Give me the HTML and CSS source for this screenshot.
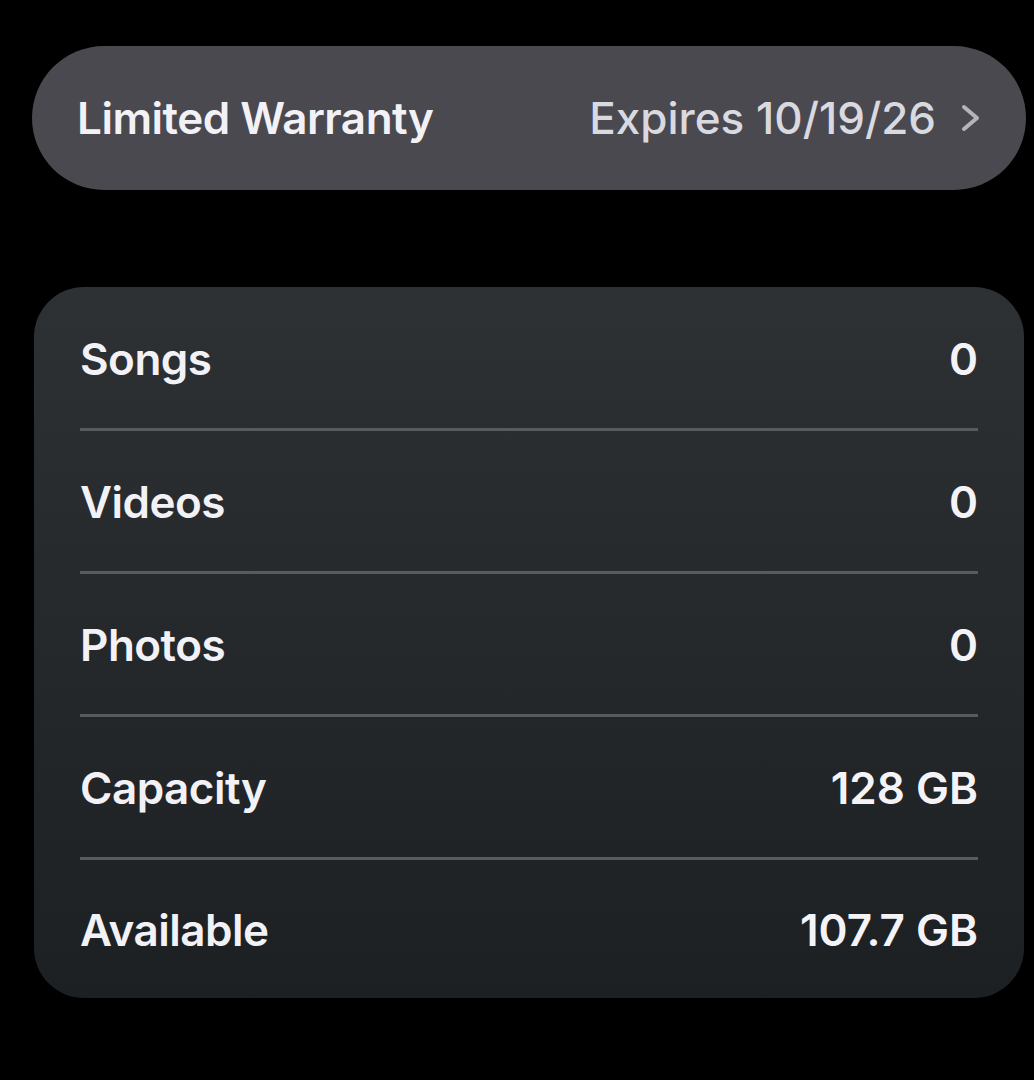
FILE: index.html
```html
<!DOCTYPE html>
<html lang="en">
<head>
  <meta charset="UTF-8" />
  <title>About</title>
  <meta name="viewport" content="width=device-width, initial-scale=1.0" />
  <link rel="stylesheet" href="styles.css">
</head>
<body>

  <div class="screen">

    <!-- warranty row -->
    <div class="pill">
      <span class="label">Limited Warranty</span>
      <span class="pill-value">
        Expires 10/19/26
        <svg class="chevron" width="20" height="30" viewBox="0 0 20 30">
          <path d="M4 4 L17 15 L4 26" fill="none" stroke="#b4b4bc" stroke-width="4" stroke-linecap="round" stroke-linejoin="round"/>
        </svg>
      </span>
    </div>

    <!-- media / storage -->
    <div class="card">
      <div class="row">
        <span class="label">Songs</span>
        <span class="value">0</span>
      </div>
      <div class="sep"></div>
      <div class="row">
        <span class="label">Videos</span>
        <span class="value">0</span>
      </div>
      <div class="sep"></div>
      <div class="row">
        <span class="label">Photos</span>
        <span class="value">0</span>
      </div>
      <div class="sep"></div>
      <div class="row">
        <span class="label">Capacity</span>
        <span class="value">128 GB</span>
      </div>
      <div class="sep"></div>
      <div class="row">
        <span class="label">Available</span>
        <span class="value">107.7 GB</span>
      </div>
    </div>

  </div>

</body>
</html>
```

FILE: styles.css
```css
body {
  margin: 0;
  background-color: #000;
  color: #f2f2f6;
  font-family: Inter, 'Liberation Sans', sans-serif;
  font-weight: 600;
}
.screen {
  width: 1034px;
  height: 1080px;
  padding-top: 46px;
  box-sizing: border-box;
  overflow: hidden;
}
.pill {
  margin: 0 8px 0 32px;
  height: 144px;
  border-radius: 72px;
  background-color: #4a4950;
  display: flex;
  align-items: center;
  justify-content: space-between;
  padding: 0 46px 0 45px;
  font-size: 44px;
}
.pill-value {
  display: flex;
  align-items: center;
  gap: 24px;
  color: #d9d9e0;
  font-weight: 500;
}
.chevron { display: block; }
.label { letter-spacing: -0.5px; }
.card {
  margin: 97px 10px 0 34px;
  border-radius: 50px;
  background: linear-gradient(#2e3134, #1c2023);
  padding: 2px 46px 0;
  font-size: 44px;
}
.row {
  height: 139px;
  display: flex;
  align-items: center;
  justify-content: space-between;
}
.row:last-child { height: 137px; }
.sep {
  height: 3px;
  margin-bottom: 1px;
  background-color: #575b5f;
}
.value { color: #f4f4f8; }
```
